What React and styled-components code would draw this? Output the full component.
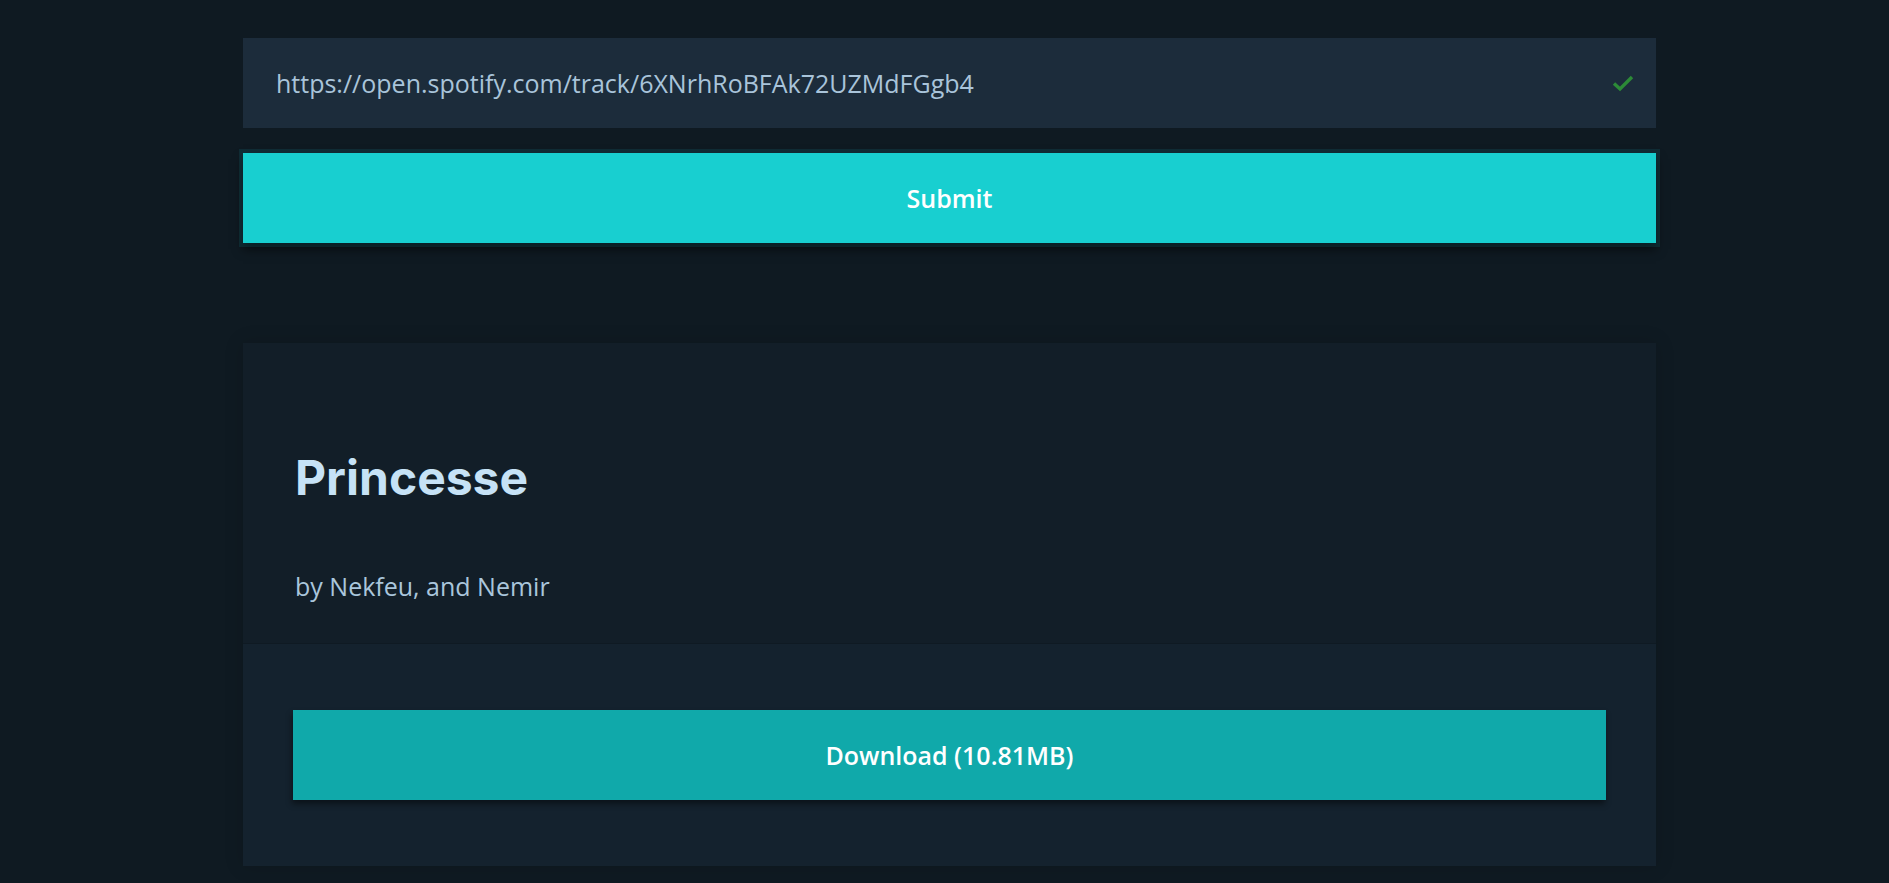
import React from "react";
import styled, {createGlobalStyle} from "styled-components";

const GlobalStyle = createGlobalStyle`
  html, body {
    margin: 0;
    padding: 0;
    background-color: #0f1a22;
    font-family: "Open Sans", "Liberation Sans", sans-serif;
  }
`

const Page = styled.div`
  min-height: 883px;
  box-sizing: border-box;
  padding: 38px 233px 0 243px;
  display: flex;
  flex-direction: column;
`

const UrlField = styled.div`
  height: 90px;
  box-sizing: border-box;
  padding: 0 22px 0 33px;
  background-color: #1c2c3b;
  display: flex;
  align-items: center;
  justify-content: space-between;

  input {
    flex: 1;
    border: none;
    outline: none;
    background: transparent;
    color: #a9c4da;
    font-family: "Open Sans", "Liberation Sans", sans-serif;
    font-size: 25px;
    padding: 0;
  }
`

const Button = styled.button`
  width: 100%;
  height: 90px;
  border: none;
  display: flex;
  align-items: center;
  justify-content: center;
  color: #ffffff;
  font-family: "Open Sans", "Liberation Sans", sans-serif;
  font-weight: 600;
  font-size: 25px;
  background-color: ${props => props.bg};
  box-shadow: ${props => props.shadow};
  cursor: pointer;
`

const SubmitRow = styled.div`
  margin-top: 25px;
`

const Card = styled.div`
  margin-top: 100px;
  display: flex;
  flex-direction: column;
  box-shadow: 0 0 18px rgba(0, 0, 0, 0.15);
`

const CardHeader = styled.div`
  height: 301px;
  box-sizing: border-box;
  padding: 107px 52px 0 52px;
  background-color: #121e28;
  border-bottom: 1px solid #0f1a23;
`

const Title = styled.h1`
  margin: 0;
  font-family: Inter, "Liberation Sans", sans-serif;
  font-weight: 700;
  font-size: 48px;
  line-height: 56px;
  color: #c6e2f6;
`

const Artists = styled.div`
  margin-top: 62px;
  font-size: 25px;
  line-height: 36px;
  color: #aac6dc;
`

const CardFooter = styled.div`
  padding: 66px 50px;
  background-color: #14222e;
`

const CheckIcon = () => (
    <svg width="22" height="18" viewBox="0 0 22 18">
        <path d="M2 9.5 L8 15 L20 3" fill="none" stroke="#2c8a37" strokeWidth="3.4"/>
    </svg>
)

const App = () => {
    return (
        <>
            <GlobalStyle/>
            <Page>
                <UrlField>
                    <input readOnly value={"https://open.spotify.com/track/6XNrhRoBFAk72UZMdFGgb4"}/>
                    <CheckIcon/>
                </UrlField>
                <SubmitRow>
                    <Button
                        bg={"#18cfd0"}
                        shadow={"0 0 0 4px rgba(24, 130, 140, 0.18), 0 6px 10px rgba(0, 0, 0, 0.6)"}
                    >
                        Submit
                    </Button>
                </SubmitRow>
                <Card>
                    <CardHeader>
                        <Title>Princesse</Title>
                        <Artists>by Nekfeu, and Nemir</Artists>
                    </CardHeader>
                    <CardFooter>
                        <Button bg={"#10a9aa"} shadow={"-1px 4px 6px rgba(0, 0, 0, 0.45)"}>
                            Download (10.81MB)
                        </Button>
                    </CardFooter>
                </Card>
            </Page>
        </>
    )
}

export default App
